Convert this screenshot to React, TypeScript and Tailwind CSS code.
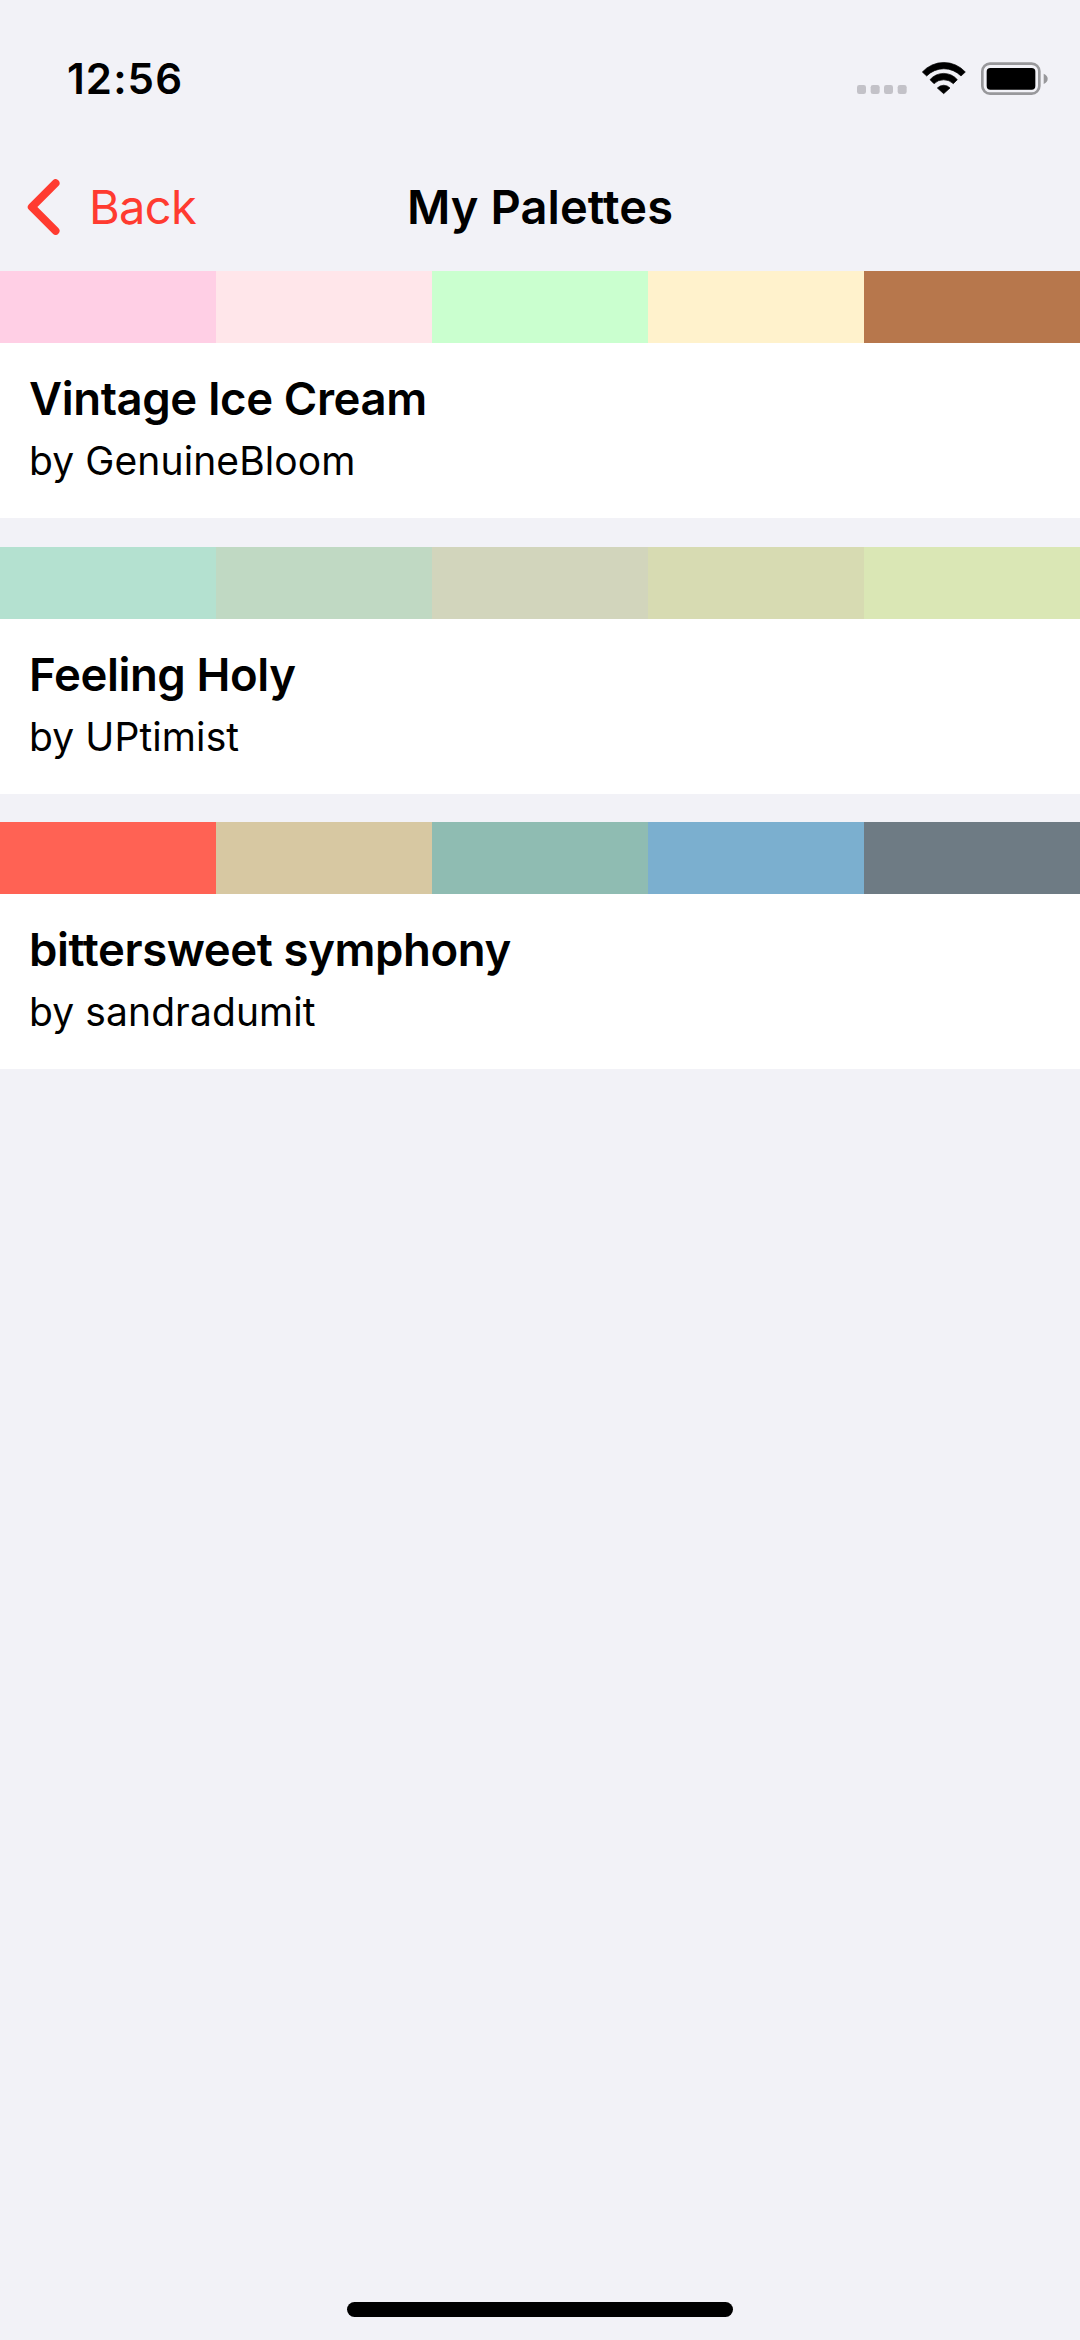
const palettes = [
  { name: "Vintage Ice Cream", author: "GenuineBloom", colors: ["bg-[#ffcfe5]", "bg-[#ffe6ea]", "bg-[#caffcf]", "bg-[#fff2cc]", "bg-[#b7774c]"] },
  { name: "Feeling Holy", author: "UPtimist", colors: ["bg-[#b4e1d0]", "bg-[#c0d9c3]", "bg-[#d2d5bc]", "bg-[#d7dbb2]", "bg-[#dae7b5]"] },
  { name: "bittersweet symphony", author: "sandradumit", colors: ["bg-[#ff6254]", "bg-[#d7c8a2]", "bg-[#8fbcb2]", "bg-[#7bafcf]", "bg-[#6e7b84]"] },
];

function StatusIcons() {
  return (
    <svg width="195" height="36" viewBox="75 60 585 108" aria-hidden="true">
      <g fill="#c3c2c8">
        <rect x="81" y="135" width="27" height="27" rx="7" />
        <rect x="122" y="135" width="27" height="27" rx="7" />
        <rect x="162" y="135" width="27" height="27" rx="7" />
        <rect x="203" y="135" width="27" height="27" rx="7" />
      </g>
      <g stroke="#000" strokeWidth="2" strokeLinejoin="round">
        <path d="M277 96A87 87 0 0 1 406 96L393 108A72 72 0 0 0 290 108Z" />
        <path d="M300 119A54 54 0 0 1 382 119L370 131A42 42 0 0 0 312 131Z" />
        <path d="M322 144A26 26 0 0 1 360 144L341 161Z" />
      </g>
      <rect x="457" y="71" width="171" height="90" rx="23" fill="none" stroke="#98989b" strokeWidth="8" />
      <rect x="470" y="84" width="146" height="65" rx="11" />
      <path d="M641 101Q653 106 653 116.500T641 132Z" fill="#98989b" />
    </svg>
  );
}

export default function App() {
  return (
    <div className="flex h-[2340px] w-[1080px] flex-col overflow-hidden bg-[#f2f2f7] font-['Inter',sans-serif] text-black">
      <div className="flex h-[138px] shrink-0 items-center justify-between pt-[18px] pr-[30px] pl-[67px]">
        <span className="pt-[2px] text-[42px] leading-[52px] font-semibold tracking-[1.1px]">12:56</span>
        <StatusIcons />
      </div>
      <div className="grid h-[133px] shrink-0 grid-cols-3 items-center pt-[5px]">
        <div className="flex items-center pl-[26px] text-[#ff3b30]">
          <svg width="36" height="56" viewBox="0 0 36 56" fill="none" stroke="currentColor" strokeWidth="8" strokeLinecap="round" strokeLinejoin="round">
            <path d="M29.500 4.200 5.800 28 29.500 51.800" />
          </svg>
          <span className="ml-[27px] text-[47px] leading-[60px] tracking-[-0.7px]">Back</span>
        </div>
        <h1 className="text-center text-[47px] leading-[60px] font-semibold tracking-[0.1px]">My Palettes</h1>
      </div>
      <div className="flex shrink-0 flex-col gap-[28.5px]">
        {palettes.map((p) => (
          <div key={p.name} className="h-[247px] bg-white">
            <div className="grid h-[72px] grid-cols-5">
              {p.colors.map((c) => (
                <div key={c} className={c} />
              ))}
            </div>
            <div className="pt-[26px] pl-[29px]">
              <h2 className="w-fit text-[45.5px] leading-[60px] font-semibold tracking-[-0.4px]">{p.name}</h2>
              <p className="mt-[2px] w-fit text-[39px] leading-[60px] tracking-[0.1px]">by {p.author}</p>
            </div>
          </div>
        ))}
      </div>
      <div className="mx-auto mt-auto mb-[23px] h-[15px] w-[386px] shrink-0 rounded-full bg-black" />
    </div>
  );
}
